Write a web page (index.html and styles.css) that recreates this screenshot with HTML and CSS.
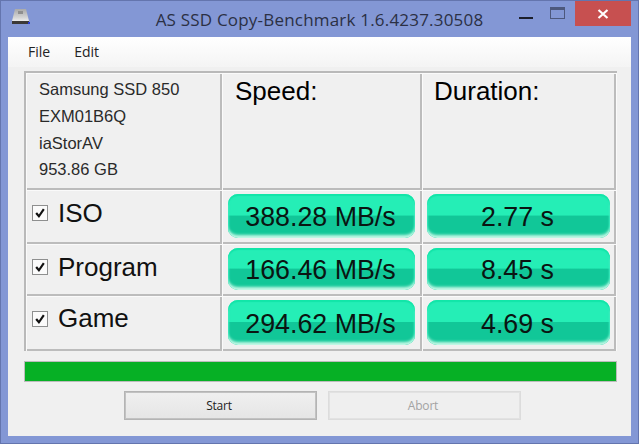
FILE: index.html
```html
<!DOCTYPE html>
<html lang="en">
<head>
    <meta charset="UTF-8">
    <meta name="viewport" content="width=device-width, initial-scale=1.0">
    <title>AS SSD Copy-Benchmark</title>
    <link rel="stylesheet" href="styles.css">
</head>
<body>
    <div class="window">
        <div class="titlebar">
            <div class="app-icon">
                <svg width="20" height="18" viewBox="0 0 20 18">
                    <defs>
                        <linearGradient id="drive" x1="0" y1="0" x2="0" y2="1">
                            <stop offset="0" stop-color="#a9a9a9"/>
                            <stop offset="0.7" stop-color="#d4d4d4"/>
                            <stop offset="1" stop-color="#ececec"/>
                        </linearGradient>
                    </defs>
                    <path d="M4 1h11l3 12H1z" fill="url(#drive)"/>
                    <path d="M7 3h5v3H7z" fill="#8f8f8f"/>
                    <path d="M1 13h17v3H1z" fill="#3c3a38"/>
                    <path d="M17 14h2v2h-2z" fill="#2a3bd0"/>
                </svg>
            </div>
            <div class="title">AS SSD Copy-Benchmark 1.6.4237.30508</div>
            <div class="controls">
                <div class="ctl ctl-min"><svg width="14" height="3"><rect width="14" height="2" y="1" fill="#1c1f2c"/></svg></div>
                <div class="ctl ctl-max"><svg width="16" height="13"><rect x="0.5" y="0.5" width="14" height="11" fill="none" stroke="#4d587d"/><rect x="1" y="1" width="13" height="2" fill="#4d587d"/></svg></div>
                <div class="ctl ctl-close"><svg width="12" height="10" viewBox="0 0 12 10"><path d="M1.5 1l9 8M10.5 1l-9 8" stroke="#fff" stroke-width="2.2" fill="none"/></svg></div>
            </div>
        </div>
        <div class="client">
            <div class="menubar">
                <span class="menu-item">File</span>
                <span class="menu-item">Edit</span>
            </div>
            <div class="content">
                <div class="results">
                    <div class="cell drive-info">
                        <div>Samsung SSD 850</div>
                        <div>EXM01B6Q</div>
                        <div>iaStorAV</div>
                        <div>953.86 GB</div>
                    </div>
                    <div class="cell heading">Speed:</div>
                    <div class="cell heading">Duration:</div>

                    <div class="cell row-label">
                        <span class="check"><svg width="12" height="12" viewBox="0 0 11 11"><path d="M2 5.5l2.5 3 4.5-6.5" stroke="#111" stroke-width="2" fill="none"/></svg></span>
                        <span class="name">ISO</span>
                    </div>
                    <div class="cell value-cell"><div class="pill">388.28 MB/s</div></div>
                    <div class="cell value-cell value-right"><div class="pill">2.77 s</div></div>

                    <div class="cell row-label">
                        <span class="check"><svg width="12" height="12" viewBox="0 0 11 11"><path d="M2 5.5l2.5 3 4.5-6.5" stroke="#111" stroke-width="2" fill="none"/></svg></span>
                        <span class="name">Program</span>
                    </div>
                    <div class="cell value-cell"><div class="pill">166.46 MB/s</div></div>
                    <div class="cell value-cell value-right"><div class="pill">8.45 s</div></div>

                    <div class="cell row-label row-last">
                        <span class="check"><svg width="12" height="12" viewBox="0 0 11 11"><path d="M2 5.5l2.5 3 4.5-6.5" stroke="#111" stroke-width="2" fill="none"/></svg></span>
                        <span class="name">Game</span>
                    </div>
                    <div class="cell value-cell"><div class="pill">294.62 MB/s</div></div>
                    <div class="cell value-cell value-right"><div class="pill">4.69 s</div></div>
                </div>
                <div class="progress"><div class="progress-fill"></div></div>
                <div class="buttons">
                    <button class="btn">Start</button>
                    <button class="btn btn-disabled">Abort</button>
                </div>
            </div>
        </div>
    </div>
</body>
</html>
```

FILE: styles.css
```css
html, body {
    margin: 0;
    padding: 0;
    overflow: hidden;
}
.window {
    width: 639px;
    height: 444px;
    box-sizing: border-box;
    border: 1px solid #6475ae;
    background-color: #8397d5;
    display: flex;
    flex-direction: column;
}
.titlebar {
    height: 36px;
    flex: none;
    display: grid;
    grid-template-columns: 1fr auto 1fr;
}
.app-icon {
    padding: 7px 0 0 10px;
}
.title {
    font-family: "Open Sans", sans-serif;
    font-size: 17px;
    letter-spacing: 0.2px;
    color: #2b3044;
    padding-top: 7px;
}
.controls {
    display: flex;
    justify-content: flex-end;
    align-items: flex-start;
    padding-right: 7px;
}
.ctl {
    display: flex;
    justify-content: center;
}
.ctl-min {
    width: 14px;
    padding-top: 15px;
    margin-right: 17px;
}
.ctl-max {
    width: 16px;
    padding-top: 6px;
    margin-right: 9px;
}
.ctl-close {
    width: 56px;
    height: 25px;
    align-items: center;
    background-color: #c75050;
}
.client {
    flex: 1;
    margin: 0 7px 7px 7px;
    background-color: #f0f0f0;
    display: flex;
    flex-direction: column;
}
.menubar {
    height: 30px;
    flex: none;
    box-sizing: border-box;
    padding: 5px 0 0 20px;
    display: flex;
    gap: 24px;
    background: linear-gradient(to bottom, #ffffff, #f4f4f4);
    font-family: "Open Sans", sans-serif;
    font-size: 14px;
    color: #222;
}
.content {
    padding: 4px 14px 0 16px;
}
.results {
    display: grid;
    grid-template-columns: 195px 199px 193px;
    grid-template-rows: 116px 53px 51px 54px;
    gap: 1px;
    border-top: 2px solid #b9b9b9;
    border-left: 2px solid #b9b9b9;
    padding: 1px 0 0 1px;
    background-color: #fafafa;
    font-family: "Liberation Sans", Arial, sans-serif;
}
.cell {
    box-sizing: border-box;
    background-color: #f0f0f0;
    border-right: 2px solid #bcbcbc;
    border-bottom: 2px solid #bcbcbc;
    min-width: 0;
}
.drive-info {
    padding: 2px 0 0 12px;
    font-size: 16.5px;
    line-height: 27px;
    color: #2a2a2a;
}
.drive-info div:nth-child(4) {
    margin-top: -1px;
}
.heading {
    padding: 1px 0 0 12px;
    font-size: 26px;
    line-height: 32px;
    color: #000;
}
.heading + .heading {
    padding-left: 11px;
}
.row-label {
    display: flex;
    align-items: flex-start;
    padding: 11px 0 0 5px;
}
.row-last .name {
    margin-top: -3px;
}
.check {
    width: 16px;
    height: 16px;
    margin-top: 3px;
    box-sizing: border-box;
    border: 1px solid #8e8f8f;
    background-color: #fbfbfb;
    display: flex;
    align-items: center;
    justify-content: center;
}
.name {
    font-size: 26px;
    line-height: 26px;
    color: #111;
    margin: -2px 0 0 10px;
}
.value-cell {
    padding: 3px 5px 4px 5px;
}
.value-right {
    padding: 3px 4px 4px 4px;
}
.pill {
    height: 100%;
    box-sizing: border-box;
    padding: 3px 2px 0 0;
    border-radius: 10px;
    background: linear-gradient(to bottom, #25eeb6 0, #25eeb6 48%, #11c798 50%, #11c798 100%);
    box-shadow: inset 0 2px 1px #12e5a8, inset 0 -4px 3px -1px #c5f9e7, inset 2px 0 2px -1px #2ae8b8, inset -2px 0 2px -1px #2ae8b8;
    font-size: 26.8px;
    text-align: center;
    color: #0a1512;
    display: flex;
    align-items: center;
    justify-content: center;
}
.progress {
    margin-top: 10px;
    height: 21px;
    box-sizing: border-box;
    border: 1px solid #bcbcbc;
    background-color: #e6e6e6;
}
.progress-fill {
    height: 100%;
    background-color: #06b025;
}
.buttons {
    margin-top: 9px;
    display: flex;
    justify-content: center;
    gap: 11px;
    padding-left: 4px;
}
.btn {
    width: 193px;
    height: 29px;
    border: 1px solid #b4b4b4;
    outline: 1px solid #c2c2c2;
    outline-offset: -2px;
    background: linear-gradient(to bottom, #f0f0f0, #e5e5e5);
    font-family: "Open Sans", sans-serif;
    font-size: 12px;
    letter-spacing: -0.2px;
    color: #222;
    padding: 0 3px 0 0;
}
.btn-disabled {
    border-color: #dcdcdc;
    outline-color: #e2e2e2;
    background: #efefef;
    color: #a3a3a3;
}
```
